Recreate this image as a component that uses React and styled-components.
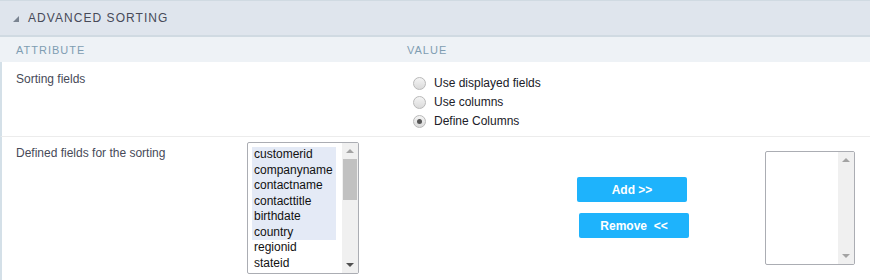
import React from 'react';
import styled, { createGlobalStyle } from 'styled-components';

const GlobalStyle = createGlobalStyle`
    body {
        margin: 0;
        background: #ffffff;
        font-family: Arial, "Liberation Sans", sans-serif;
    }
`;

const Panel = styled.div`
    width: 870px;
    height: 280px;
    overflow: hidden;
    background: #ffffff;
`;

const Header = styled.div`
    height: 34px;
    display: flex;
    align-items: center;
    gap: 9px;
    padding-left: 13px;
    background: #dfe5ed;
    border-top: 1px solid #d0dae2;
    border-bottom: 2px solid #d0dae2;
    color: #474a58;
    font-size: 12px;
    letter-spacing: 1.05px;
    text-transform: uppercase;
`;

const Triangle = styled.span`
    width: 0;
    height: 0;
    margin-top: 2px;
    border-left: 6px solid transparent;
    border-bottom: 6px solid #7a8491;
`;

const ColumnHead = styled.div`
    height: 25px;
    display: grid;
    grid-template-columns: 391px 1fr;
    align-items: center;
    padding-left: 16px;
    background: #eef2f6;
    color: #7f9db2;
    font-size: 11px;
    letter-spacing: 1px;
`;

const Row = styled.div`
    display: flex;
    border-left: 2px solid #d4e0e8;
    border-bottom: ${p => (p.$last ? 'none' : '1px solid #ececec')};
    height: ${p => p.$h}px;
    box-sizing: border-box;
`;

const Label = styled.div`
    width: ${p => p.$w}px;
    flex-shrink: 0;
    box-sizing: border-box;
    padding: ${p => p.$top}px 0 0 14px;
    color: #474a58;
    font-size: 12px;
    line-height: 14px;
`;

const RadioList = styled.div`
    display: flex;
    flex-direction: column;
    padding-top: 14px;
    padding-left: 12px;
    gap: 5px;
`;

const RadioOption = styled.label`
    display: flex;
    align-items: center;
    gap: 8px;
    color: #202028;
    font-size: 12px;
    line-height: 14px;
`;

const RadioDot = styled.span`
    width: 11px;
    height: 11px;
    border-radius: 50%;
    border: 1px solid #b9b9b9;
    background: linear-gradient(#f4f4f4, #dadada);
    display: flex;
    align-items: center;
    justify-content: center;

    &::after {
        content: '';
        width: 5px;
        height: 5px;
        border-radius: 50%;
        background: ${p => (p.$checked ? '#555' : 'transparent')};
    }
`;

const ListBox = styled.div`
    width: ${p => p.$w}px;
    height: ${p => p.$h}px;
    margin-top: ${p => p.$top}px;
    margin-left: ${p => p.$left || 0}px;
    box-sizing: border-box;
    border: 1px solid #abadb3;
    border-radius: 2px;
    display: flex;
    overflow: hidden;
    flex-shrink: 0;
`;

const Items = styled.div`
    flex: 1;
    padding: 4px 6px 0 4px;
`;

const Item = styled.div`
    font-size: 12px;
    line-height: 15.5px;
    color: #111;
    padding-left: 2px;
    background: ${p => (p.$selected ? '#e4eaf6' : 'transparent')};
`;

const ScrollBar = styled.div`
    width: 16px;
    background: #f0f0f0;
    display: flex;
    flex-direction: column;
    align-items: center;
    padding: 6px 0 6px;
    box-sizing: border-box;
`;

const Arrow = styled.span`
    width: 0;
    height: 0;
    border-left: 4px solid transparent;
    border-right: 4px solid transparent;
    ${p => (p.$up ? 'border-bottom: 4px solid' : 'border-top: 4px solid')} ${p => (p.$dim ? '#a3a3a3' : '#505050')};
`;

const Thumb = styled.div`
    width: 14px;
    height: 41px;
    margin-top: 6px;
    background: #c1c1c1;
`;

const Spacer = styled.div`
    flex: 1;
`;

const ButtonColumn = styled.div`
    display: flex;
    flex-direction: column;
    margin-left: 218px;
    margin-top: 40px;
    gap: 11px;
`;

const Button = styled.button`
    width: 110px;
    height: 25px;
    margin-left: ${p => p.$shift || 0}px;
    border: none;
    border-radius: 2px;
    background: #1eb3fc;
    color: #ffffff;
    font-family: Arial, "Liberation Sans", sans-serif;
    font-size: 12px;
    font-weight: bold;
    white-space: pre;
`;

const fields = [
    'customerid', 'companyname', 'contactname', 'contacttitle', 'birthdate',
    'country', 'regionid', 'stateid', 'city',
];

const App = () => {
    return (
        <Panel>
            <GlobalStyle />

            {/* Title bar */}
            <Header>
                <Triangle />
                Advanced Sorting
            </Header>

            <ColumnHead>
                <span>ATTRIBUTE</span>
                <span>VALUE</span>
            </ColumnHead>

            {/* Sorting fields */}
            <Row $h={75}>
                <Label $w={399} $top={10}>Sorting fields</Label>
                <RadioList>
                    <RadioOption><RadioDot />Use displayed fields</RadioOption>
                    <RadioOption><RadioDot />Use columns</RadioOption>
                    <RadioOption><RadioDot $checked />Define Columns</RadioOption>
                </RadioList>
            </Row>

            {/* Defined fields */}
            <Row $h={143} $last>
                <Label $w={245} $top={9}>Defined fields for the sorting</Label>
                <ListBox $w={112} $h={132} $top={5}>
                    <Items>
                        {fields.map((f, i) => (
                            <Item key={f} $selected={i < 6}>{f}</Item>
                        ))}
                    </Items>
                    <ScrollBar>
                        <Arrow $up $dim />
                        <Thumb />
                        <Spacer />
                        <Arrow />
                    </ScrollBar>
                </ListBox>

                <ButtonColumn>
                    <Button>Add &gt;&gt;</Button>
                    <Button $shift={2}>Remove  &lt;&lt;</Button>
                </ButtonColumn>

                <ListBox $w={90} $h={114} $top={14} $left={76}>
                    <Items />
                    <ScrollBar>
                        <Arrow $up $dim />
                        <Spacer />
                        <Arrow $dim />
                    </ScrollBar>
                </ListBox>
            </Row>
        </Panel>
    );
};

export default App;
